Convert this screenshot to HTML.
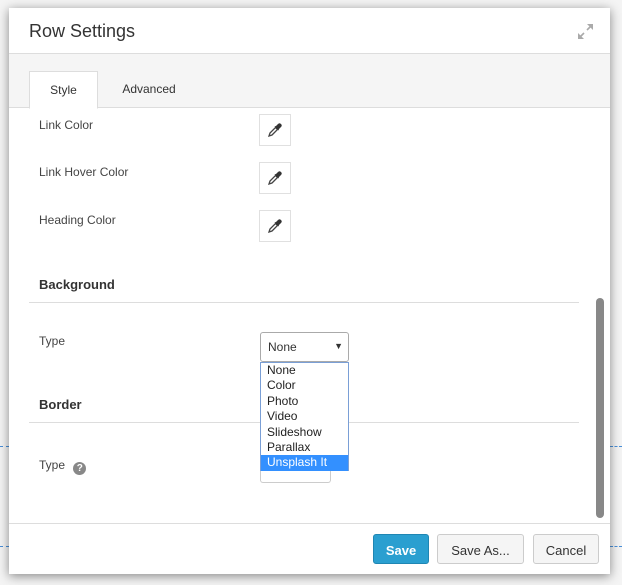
<!DOCTYPE html>
<html><head><style>
*{box-sizing:border-box;margin:0;padding:0}
body{width:622px;height:585px;background:#f4f4f4;position:relative;overflow:hidden;font-family:"Liberation Sans",sans-serif;color:#333}
.dash{position:absolute;height:0;border-top:1px dashed #4a90d9}
.dlg{position:absolute;left:9px;top:8px;width:601px;height:566px;background:#fff;box-shadow:0 2px 10px rgba(0,0,0,.45)}
.hd{position:absolute;left:0;top:0;width:100%;height:46px;border-bottom:1px solid #ddd;background:#fff}
.hd h1{position:absolute;left:20px;top:13px;font-size:18px;font-weight:normal;color:#333}
.tabs{position:absolute;left:0;top:46px;width:100%;height:54px;background:#f5f5f5;border-bottom:1px solid #ddd}
.tab{position:absolute;top:17px;height:38px;font-size:12px;padding-top:11px;text-align:center}
.t1{left:20px;width:69px;background:#fff;border:1px solid #ddd;border-bottom:1px solid #fff}
.t2{left:100px;width:80px;color:#333}
.lbl{position:absolute;left:30px;font-size:12px;color:#444}
.pick{position:absolute;left:250px;width:32px;height:32px;border:1px solid #e0e0e0;background:#fff}
.pick svg{position:absolute;left:7px;top:7px}
.sec{position:absolute;left:30px;font-size:13px;font-weight:bold;color:#333}
.hr{position:absolute;left:20px;width:550px;border-top:1px solid #ddd}
.sel{position:absolute;left:251px;top:324px;width:89px;height:30px;border:1px solid #aaa;border-radius:3px;font-size:12px;padding:7px 0 0 7px;background:#fff}
.sel span{position:absolute;right:5px;top:8px;font-size:9px}
.dd{position:absolute;left:251px;top:354px;width:89px;height:109px;border:1px solid #7a9fd6;background:#fff;font-size:12px;line-height:15.4px}
.dd div{padding-left:6px;color:#222}
.dd .on{background:#3390ff;color:#fff}
.box2{position:absolute;left:251px;top:460px;width:71px;height:15px;border:1px solid #ccc;border-top:none;border-radius:0 0 3px 3px}
.sb{position:absolute;left:587px;top:290px;width:8px;height:220px;background:#888;border-radius:4px}
.ft{position:absolute;left:0;top:515px;width:100%;border-top:1px solid #ddd}
.btn{position:absolute;top:526px;height:30px;border-radius:3px;font-size:13px;text-align:center;padding-top:8px}
</style></head><body>
<div class="dash" style="left:0;top:446px;width:9px"></div>
<div class="dash" style="left:0;top:546px;width:9px"></div>
<div class="dash" style="left:610px;top:446px;width:12px"></div>
<div class="dash" style="left:610px;top:546px;width:12px"></div>
<div class="dlg">
<div class="hd"><h1>Row Settings</h1>
<svg style="position:absolute;left:568px;top:15px" width="17" height="17" viewBox="0 0 17 17"><g stroke="#aaa" stroke-width="1.6" fill="#aaa"><line x1="3" y1="14" x2="7" y2="10"/><line x1="14" y1="3" x2="10" y2="7"/><polygon points="1,16 1,10 7,16" stroke="none"/><polygon points="16,1 10,1 16,7" stroke="none"/></g></svg></div>
<div class="tabs"><div class="tab t1">Style</div><div class="tab t2">Advanced</div></div>
<div class="lbl" style="top:110px">Link Color</div>
<div class="pick" style="top:106px"><svg width="16" height="16" viewBox="0 0 16 16"><path d="M2 14 L3 11 L8.5 5.5 L10.5 7.5 L5 13 Z" fill="none" stroke="#444" stroke-width="1.3"/><path d="M7.5 4.5 L9 4 L11 2 Q12.5 0.5 14 2 Q15.5 3.5 14 5 L12 7 L11.5 8.5 Z" fill="#333"/></svg></div>
<div class="lbl" style="top:157px">Link Hover Color</div>
<div class="pick" style="top:154px"><svg width="16" height="16" viewBox="0 0 16 16"><path d="M2 14 L3 11 L8.5 5.5 L10.5 7.5 L5 13 Z" fill="none" stroke="#444" stroke-width="1.3"/><path d="M7.5 4.5 L9 4 L11 2 Q12.5 0.5 14 2 Q15.5 3.5 14 5 L12 7 L11.5 8.5 Z" fill="#333"/></svg></div>
<div class="lbl" style="top:205px">Heading Color</div>
<div class="pick" style="top:202px"><svg width="16" height="16" viewBox="0 0 16 16"><path d="M2 14 L3 11 L8.5 5.5 L10.5 7.5 L5 13 Z" fill="none" stroke="#444" stroke-width="1.3"/><path d="M7.5 4.5 L9 4 L11 2 Q12.5 0.5 14 2 Q15.5 3.5 14 5 L12 7 L11.5 8.5 Z" fill="#333"/></svg></div>
<div class="sec" style="top:269px">Background</div>
<div class="hr" style="top:294px"></div>
<div class="lbl" style="top:326px">Type</div>
<div class="sel">None<span>▼</span></div>
<div class="sec" style="top:389px">Border</div>
<div class="hr" style="top:414px"></div>
<div class="lbl" style="top:450px">Type <span style="display:inline-block;width:13px;height:13px;border-radius:50%;background:#888;color:#fff;font-size:10px;font-weight:bold;text-align:center;line-height:13px;margin-left:5px;vertical-align:-2px">?</span></div>
<div class="box2"></div>
<div class="dd"><div>None</div><div>Color</div><div>Photo</div><div>Video</div><div>Slideshow</div><div>Parallax</div><div class="on">Unsplash It</div></div>
<div class="sb"></div>
<div class="ft"></div>
<div class="btn" style="left:364px;width:56px;background:#2a9fd0;border:1px solid #1f86b3;color:#fff;font-weight:bold">Save</div>
<div class="btn" style="left:428px;width:87px;background:#f5f5f5;border:1px solid #ccc">Save As...</div>
<div class="btn" style="left:524px;width:66px;background:#f5f5f5;border:1px solid #ccc">Cancel</div>
</div>
</body></html>
